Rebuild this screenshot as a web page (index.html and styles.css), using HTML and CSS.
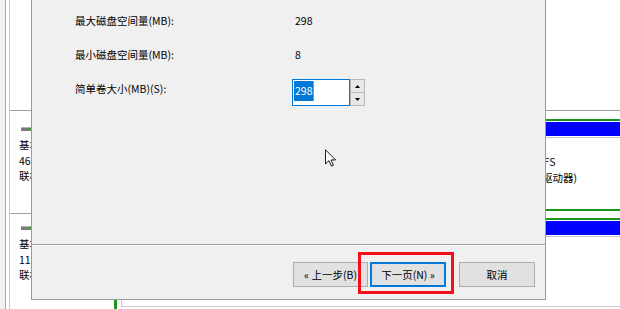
FILE: index.html
```html
<!DOCTYPE html>
<html lang="zh-CN">
<head>
<meta charset="utf-8">
<title>新建简单卷向导</title>
<link rel="stylesheet" href="styles.css">
</head>
<body>
<div class="page">
  <div class="dm">
    <div class="dm-edge"></div>
    <div class="dm-gap"></div>
    <div class="dm-main">
      <div class="dm-top"></div>
      <div class="dm-spacer"></div>
      <div class="disk disk-first">
        <div class="disk-label">
          <svg class="disk-icon" width="11" height="4" viewBox="0 0 11 4"><rect x="0" y="0" width="11" height="4" fill="#7a7a7a"/><rect x="0" y="0" width="11" height="1" fill="#b0b0b0"/><rect x="8" y="1" width="2" height="2" fill="#22b022"/></svg>
          <div class="disk-text">基本<br>465.76 GB<br>联机</div>
        </div>
        <div class="disk-parts">
          <div class="ext">
            <div class="vol vol-a">
              <div class="vol-hdr"></div>
              <div class="vol-body">新加卷 (D:)<br>348.27 GB NTFS<br>状态良好 (逻辑驱动器)</div>
            </div>
            <div class="vol vol-b">
              <div class="vol-hdr"></div>
              <div class="vol-body">新加卷 (E:)<br>1024.00 GB NTFS<br>状态良好 (逻辑驱动器)</div>
            </div>
          </div>
        </div>
      </div>
      <div class="disk">
        <div class="disk-label">
          <svg class="disk-icon" width="11" height="4" viewBox="0 0 11 4"><rect x="0" y="0" width="11" height="4" fill="#7a7a7a"/><rect x="0" y="0" width="11" height="1" fill="#b0b0b0"/><rect x="8" y="1" width="2" height="2" fill="#22b022"/></svg>
          <div class="disk-text">基本<br>119.24 GB<br>联机</div>
        </div>
        <div class="disk-parts">
          <div class="ext ext-last">
            <div class="vol vol-r2">
              <div class="vol-hdr"></div>
              <div class="vol-body">新加卷 (G:)<br>NTFS</div>
            </div>
          </div>
        </div>
      </div>
    </div>
  </div>

  <div class="dlg">
    <div class="dlg-body">
      <div class="form">
        <div class="f-label">最大磁盘空间量(MB):</div>
        <div class="f-value">298</div>
        <div class="f-label">最小磁盘空间量(MB):</div>
        <div class="f-value">8</div>
        <div class="f-label f-label-spin">简单卷大小(MB)(S):</div>
        <div class="spin">
          <div class="spin-field"><span class="sel">298</span></div>
          <div class="spin-btns">
            <div class="spin-btn"><svg width="5" height="3" viewBox="0 0 5 3"><polygon points="2.5,0 5,3 0,3" fill="#000"/></svg></div>
            <div class="spin-btn"><svg width="5" height="3" viewBox="0 0 5 3"><polygon points="0,0 5,0 2.5,3" fill="#000"/></svg></div>
          </div>
        </div>
      </div>
    </div>
    <div class="dlg-foot">
      <button class="btn btn-back">« 上一步(B)</button>
      <button class="btn btn-next">下一页(N) »</button>
      <button class="btn btn-cancel">取消</button>
    </div>
    <div class="red-frame"></div>
    <svg class="cursor" width="11" height="18" viewBox="0 0 12 19"><path d="M0.5 0.5 L0.5 16 L4.3 12.4 L7 18.4 L9.2 17.4 L6.6 11.6 L11.5 11.6 Z" fill="#fff" stroke="#000" stroke-width="1" stroke-linejoin="miter"/></svg>
  </div>
</div>
</body>
</html>
```
FILE: styles.css
```css
* { box-sizing: border-box; }
html, body { margin: 0; padding: 0; }
body {
  width: 620px;
  height: 309px;
  overflow: hidden;
  background: #fff;
  font-family: "Noto Sans CJK SC", "Microsoft YaHei", sans-serif;
  font-size: 10.5px;
  color: #000;
}
.page { position: relative; width: 620px; height: 309px; overflow: hidden; }

/* background: disk management */
.dm { display: flex; width: 620px; height: 309px; background: #fff; }
.dm-edge { flex: none; width: 6px; background: #f3f3f3; border-right: 1px solid #a8a8a8; }
.dm-gap { flex: none; width: 3px; }
.dm-main { flex: 1; border-left: 1px solid #c8c8c8; display: flex; flex-direction: column; min-width: 0; }
.dm-top { flex: none; height: 111px; border-bottom: 1px solid #a0a0a0; }
.dm-spacer { flex: none; height: 4px; }
.disk { flex: none; height: 99px; display: flex; }
.disk-label { flex: none; width: 104px; padding: 12px 0 0 9px; }
.disk-first .disk-label { border-bottom: 1px solid #a0a0a0; }
.disk-icon { display: block; margin-left: 2px; }
.disk-text { margin-top: 6px; line-height: 15.5px; white-space: nowrap; }
.disk-parts { flex: none; width: 620px; padding-top: 4px; }
.ext { height: 92px; border: 2px solid #1b961b; border-left-width: 3px; padding: 1px 0 0 4px; display: flex; }
.ext-last { height: 110px; }
.vol { display: flex; flex-direction: column; border-left: 1px solid #c8c8c8; }
.vol-hdr { flex: none; height: 15px; background: #0000ff; border-bottom: 1px solid #fff; }
.vol-body { border-top: 1px solid #c4c4c4; padding-left: 2px; line-height: 16px; white-space: nowrap; }
.vol-a { flex: none; width: 349px; }
.vol-b { flex: 1; }
.vol-r2 { flex: 1; height: 86px; border-bottom: 1px solid #c8c8c8; }

/* dialog */
.dlg {
  position: absolute;
  left: 31px;
  top: -1px;
  width: 515px;
  height: 301px;
  border: 1px solid #9a9a9a;
  background: #f0f0f0;
  display: flex;
  flex-direction: column;
}
.dlg-body { flex: none; height: 245px; border-bottom: 1px solid #a0a0a0; }
.dlg-foot {
  flex: 1;
  border-top: 1px solid #fff;
  padding: 16px 10px 0 0;
  display: flex;
  justify-content: flex-end;
  align-items: flex-start;
}
.form {
  padding: 13px 0 0 43px;
  display: grid;
  grid-template-columns: 217px auto;
  grid-template-rows: 34px 32px 27px;
  align-items: start;
}
.f-label, .f-value { line-height: 16px; white-space: nowrap; }
.f-value { padding-left: 3px; }
.f-label-spin { margin-top: 2px; }

.spin { display: flex; width: 73px; height: 27px; }
.spin-field {
  flex: 1;
  border: 1px solid #0078d7;
  background: #fff;
  padding: 1px 0 0 1px;
}
.sel {
  display: inline-block;
  height: 20px;
  line-height: 20px;
  padding: 0 1px;
  background: #0078d7;
  color: #fff;
  font-size: 10.5px;
  border-right: 1px solid #d08a3c;
}
.spin-btns { flex: none; width: 15px; display: flex; flex-direction: column; }
.spin-btn {
  flex: 1;
  border: 1px solid #b8b8b8;
  background: #e8e8e8;
  display: flex;
  align-items: center;
  justify-content: center;
}
.spin-btn + .spin-btn { border-top: none; }

.btn {
  height: 25px;
  border: 1px solid #adadad;
  background: #e1e1e1;
  font-family: "Noto Sans CJK SC", "Microsoft YaHei", sans-serif;
  font-size: 10.5px;
  color: #000;
  padding: 0;
  white-space: nowrap;
  line-height: 22px;
}
.btn-back { width: 75px; margin-right: 2px; }
.btn-next { width: 76px; border-color: #0078d7; box-shadow: inset 0 0 0 1px #0078d7; }
.btn-cancel { width: 76px; margin-left: 13px; }

.red-frame {
  position: absolute;
  left: 326px;
  top: 252px;
  width: 96px;
  height: 42px;
  border: 3px solid #f2101a;
}
.cursor { position: absolute; left: 293px; top: 149px; }
```
